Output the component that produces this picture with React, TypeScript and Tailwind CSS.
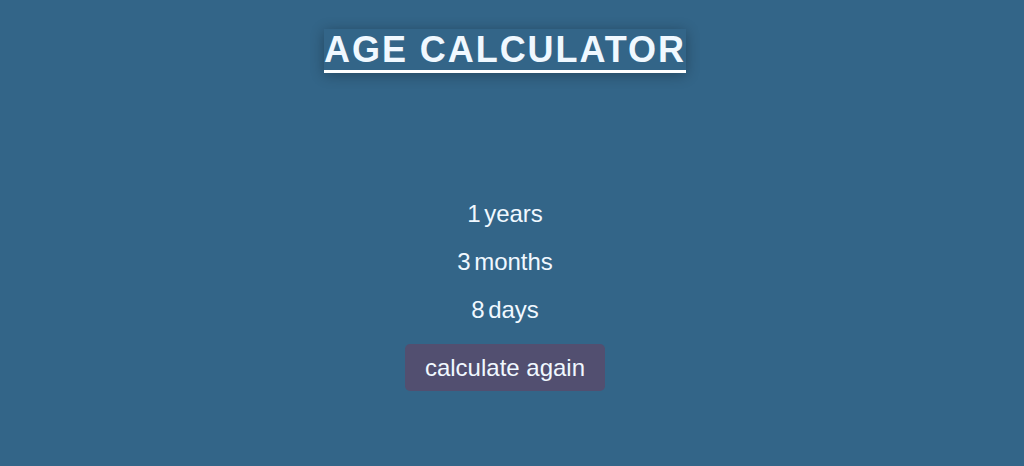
import { useState } from "react";

export default function App() {
  const [age] = useState({ years: 1, months: 3, days: 8 });

  return (
    <div className="min-h-[466px] w-full bg-[#336588] font-['Liberation_Sans',Arial,sans-serif] text-[#f0f8ff]">
      <div className="flex w-[1010px] flex-col items-center pt-[29px]">
        <h1 className="border-b-[3px] border-white text-[36px] font-bold uppercase leading-[41px] tracking-[1.95px] shadow-[0_2px_14px_rgba(0,0,0,0.3)]">
          Age Calculator
        </h1>

        <div className="mt-[127px] flex flex-col items-center gap-[21px] text-[24px] leading-[27px]">
          <p className="[word-spacing:-3px]">{age.years} years</p>
          <p className="[word-spacing:-3px]">{age.months} months</p>
          <p className="[word-spacing:-3px]">{age.days} days</p>
          <button className="rounded-[5px] bg-[#524f70] px-[20px] py-[10px] text-[24px] leading-[27px] text-[#f0f8ff]">
            calculate again
          </button>
        </div>
      </div>
    </div>
  );
}
